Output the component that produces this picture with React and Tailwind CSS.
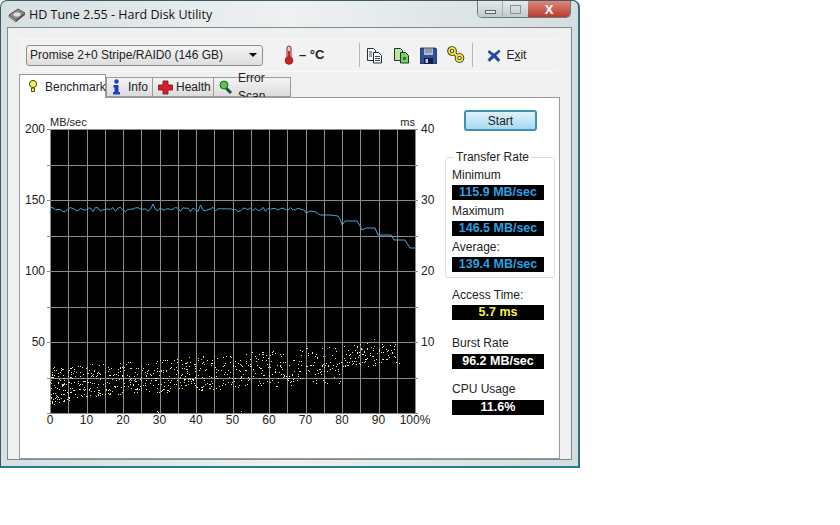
import React from "react";

const ui = { fontFamily: '"Liberation Sans", Arial, sans-serif' };

// small repeatable noise so the chart is the same on every load
const rnd = (n) => {
  const v = Math.sin(n * 12.9898 + 4.1) * 43758.5453;
  return v - Math.floor(v);
};

const gridX = Array.from({ length: 21 }, (_, i) => 50 + i * 18.25);
const gridY = Array.from({ length: 9 }, (_, i) => 129 + i * 35.5);

const lineTail = [
  [300, 209], [304, 210], [306, 213], [310, 211], [316, 212], [320, 215], [330, 215],
  [338, 216], [340, 219], [342, 225], [345, 221], [357, 221], [360, 226], [362, 230],
  [366, 228], [375, 228], [378, 235], [391, 235], [394, 240], [405, 240], [410, 248], [415, 248],
];

const linePoints = () => {
  const pts = [[50, 213], [51, 207]];
  for (let x = 53; x < 300; x += 2.5) {
    let y = 209.5 + (rnd(x) - 0.5) * 4.5;
    if (Math.abs(x - 154) < 1.5) y = 204;
    if (Math.abs(x - 200) < 1.5) y = 205;
    pts.push([x, y]);
  }
  return pts.concat(lineTail).map((p) => p.join(",")).join(" ");
};

const scatter = () => {
  const dots = [];
  for (let i = 0; i < 820; i++) {
    const t = Math.pow(rnd(i + 0.3), 1.25);
    const x = 50 + t * 345;
    const top = 367 - (x - 50) * 0.075;
    const bottom = x < 80 ? 405 - (x - 50) * 0.25 : 397 - (x - 80) * 0.055;
    const spread = x > 340 ? 0.6 : 1;
    const y = top + rnd(i + 7.7) * (bottom - top) * spread;
    dots.push([Math.round(x), Math.round(y)]);
  }
  dots.push([157, 411], [158, 412], [241, 411], [396, 362], [399, 363], [374, 339], [393, 342]);
  return dots;
};

const xLabels = ["0", "10", "20", "30", "40", "50", "60", "70", "80", "90"];

const Chart = () => (
  <svg viewBox="20 110 425 330" className="w-[425px] h-[330px] shrink-0" style={ui}>
    <rect x="50" y="129" width="365" height="284" fill="#000" />
    <g stroke="#8c8c8c" strokeWidth="1" shapeRendering="crispEdges">
      {gridX.map((x) => <line key={x} x1={Math.round(x) + 0.5} x2={Math.round(x) + 0.5} y1="129" y2="413" />)}
      {gridY.map((y) => <line key={y} x1="47" x2="418" y1={Math.round(y) + 0.5} y2={Math.round(y) + 0.5} />)}
    </g>
    <g fill="#e9e9a4" shapeRendering="crispEdges">
      {scatter().map(([x, y], i) => <rect key={i} x={x} y={y} width="1" height="1" />)}
    </g>
    <polyline points={linePoints()} fill="none" stroke="#4aa6d6" strokeWidth="1" />
    <g fill="#222" fontSize="12">
      <text x="50" y="126" fontSize="11">MB/sec</text>
      <text x="415" y="126" textAnchor="end" fontSize="11">ms</text>
      <text x="45" y="133" textAnchor="end">200</text>
      <text x="45" y="204" textAnchor="end">150</text>
      <text x="45" y="275" textAnchor="end">100</text>
      <text x="45" y="346" textAnchor="end">50</text>
      <text x="421" y="133">40</text>
      <text x="421" y="204">30</text>
      <text x="421" y="275">20</text>
      <text x="421" y="346">10</text>
      {xLabels.map((l, i) => <text key={l} x={50 + i * 36.5} y="424" textAnchor="middle">{l}</text>)}
      <text x="415" y="424" textAnchor="middle">100%</text>
    </g>
  </svg>
);

const Readout = ({ value, color }) => (
  <div className={`w-[92px] h-[15px] bg-black font-bold text-[12.5px] leading-[15px] text-center ${color}`}>{value}</div>
);

const DiskIcon = () => (
  <svg width="18" height="16" viewBox="0 0 18 16">
    <path d="M1 8 L10 2 L17 6 L8 13 Z" fill="#8d8d88" stroke="#55524c" />
    <path d="M1 8 L8 13 L8 15 L1 10 Z" fill="#b9a98c" stroke="#55524c" strokeWidth=".6" />
    <path d="M8 13 L17 6 L17 8 L8 15 Z" fill="#56534e" />
    <ellipse cx="9" cy="7.5" rx="3.5" ry="2" fill="#ddd" />
  </svg>
);

const Thermometer = () => (
  <svg width="12" height="20" viewBox="0 0 12 20">
    <rect x="4" y="1" width="4" height="13" rx="2" fill="#e8c8c8" stroke="#8a2a2a" />
    <rect x="5" y="6" width="2" height="9" fill="#d42020" />
    <circle cx="6" cy="15.5" r="3.8" fill="#d42020" stroke="#8a2a2a" />
  </svg>
);

const CopyIcon = ({ green }) => (
  <svg width="17" height="17" viewBox="0 0 17 17">
    <path d="M1.5 1.5h6l2 2v10h-8z" fill={green ? "#bfe6a0" : "#fff"} stroke="#1f2f3f" />
    <path d="M7.5 5.5h5l3 3v7.500h-8z" fill={green ? "#7fcf5a" : "#fff"} stroke="#1f2f3f" />
    {green ? (
      <rect x="10" y="10" width="3" height="3" fill="#1f7f2f" />
    ) : (
      <path d="M9 9.500h5M9 11.500h5M9 13.500h5M3 5h3M3 7h3M3 9h3" stroke="#35506a" />
    )}
  </svg>
);

const FloppyIcon = () => (
  <svg width="17" height="17" viewBox="0 0 17 17">
    <path d="M.5 1h15l1 1v15H.5z" fill="#2c4f9e" stroke="#14275c" strokeWidth=".8" />
    <rect x="4" y="1.500" width="9" height="6.500" fill="#b8bcc8" />
    <path d="M5 3h7M5 5h7" stroke="#6c7280" />
    <rect x="4" y="11" width="9" height="6" fill="#10203f" />
    <rect x="5.500" y="12" width="2.500" height="4" fill="#c8ccd8" />
  </svg>
);

const ChainIcon = () => (
  <svg width="18" height="18" viewBox="0 0 18 18">
    <g fill="none" stroke="#2f2f10" strokeWidth="3.600">
      <circle cx="5" cy="5" r="3" />
      <circle cx="12.500" cy="12" r="3" />
      <path d="M7 7l3 3" />
    </g>
    <g fill="none" stroke="#f1e24a" strokeWidth="1.800">
      <circle cx="5" cy="5" r="3" />
      <circle cx="12.500" cy="12" r="3" />
      <path d="M7 7l3 3" />
    </g>
  </svg>
);

const ExitX = () => (
  <svg width="14" height="13" viewBox="0 0 14 13">
    <path d="M2 1.500 L7 5 L12 1 L13 2.500 L9 6.500 L13 11 L11 12.500 L7 8.500 L2.500 12.500 L1 10.500 L5 6.500 L1 3 Z" fill="#1d49ad" stroke="#12307c" strokeWidth=".6" />
  </svg>
);

const BulbIcon = () => (
  <svg width="10" height="15" viewBox="0 0 10 15">
    <circle cx="5" cy="5" r="3.600" fill="#f3ef58" stroke="#4a4a18" />
    <path d="M3.500 9h3v3.500h-3z" fill="#f3ef58" stroke="#4a4a18" />
  </svg>
);

const InfoIcon = () => (
  <svg width="9" height="16" viewBox="0 0 9 16">
    <circle cx="4.500" cy="2.500" r="2.200" fill="#1b3fc0" />
    <path d="M1.500 6h5v7h1.500v2.500H1v-2.500h1.500V8.500h-1z" fill="#1b3fc0" />
  </svg>
);

const CrossIcon = () => (
  <svg width="15" height="15" viewBox="0 0 15 15">
    <path d="M5 1h5v4h4.500v5H10v4H5v-4H.500V5H5z" fill="#d8202a" stroke="#6c1014" strokeWidth=".8" />
  </svg>
);

const ZoomIcon = () => (
  <svg width="14" height="15" viewBox="0 0 14 15">
    <path d="M7 8l5 5" stroke="#1e4a4a" strokeWidth="3" />
    <circle cx="5" cy="5" r="4" fill="#5ec24a" stroke="#1d6a30" />
  </svg>
);

const Tab = ({ icon, label, active, className }) => (
  <div
    className={`flex items-center border border-[#9a9a9a] text-[12px] text-[#222] ${
      active
        ? "h-[24px] bg-white border-b-0 relative z-10 -mb-px"
        : "h-[20px] bg-gradient-to-b from-[#f4f4f4] to-[#dcdcdc] -ml-px"
    } ${className}`}
  >
    {icon}
    <span>{label}</span>
  </div>
);

const WindowButtons = () => (
  <div className="flex h-[17px] mr-[7px] border border-t-0 border-[#6f7a80] rounded-b-[5px] overflow-hidden">
    <div className="w-[25px] flex items-center justify-center bg-gradient-to-b from-[#e6e9ea] to-[#c4c9cc] border-r border-[#a9b0b3]">
      <div className="w-[11px] h-[4px] mt-[5px] border border-[#5d666c] bg-[#e8ecee]" />
    </div>
    <div className="w-[25px] flex items-center justify-center bg-gradient-to-b from-[#e6e9ea] to-[#c4c9cc]">
      <div className="w-[11px] h-[9px] border border-[#8c9498]" />
    </div>
    <div className="w-[42px] flex items-center justify-center bg-gradient-to-b from-[#d9887c] to-[#b83a2c] text-white font-bold text-[13px] leading-none">
      X
    </div>
  </div>
);

export default function App() {
  return (
    <div className="w-[840px] h-[525px] bg-white" style={ui}>
      <div className="w-[580px] h-[468px] flex flex-col rounded-t-[7px] border border-[#3d5a63] border-b-2 border-b-[#2b7c88] border-r-2 border-r-[#2f6f7a] bg-gradient-to-r from-[#d6dfe2] via-[#eef1f2] to-[#d4dde0]">
        <div className="h-[26px] flex justify-between shrink-0">
          <div className="flex items-center gap-[3px] pl-[7px] pt-[2px]">
            <DiskIcon />
            <span className="text-[12.5px] text-[#111]" style={{ fontFamily: '"Open Sans", sans-serif' }}>
              HD Tune 2.55 - Hard Disk Utility
            </span>
          </div>
          <WindowButtons />
        </div>

        <div className="mx-[6px] mb-[6px] grow border border-[#7f8a8f] bg-[#f0f0f0] flex flex-col px-[11px] pt-[10px]">
          <div className="h-[34px] mr-[1px] flex items-center border-y border-[#f8f8f8] bg-[#f2f2f2] rounded-[2px] pl-[7px]">
            <div className="w-[237px] h-[21px] flex items-center justify-between border border-[#8e8e8e] rounded-[3px] bg-gradient-to-b from-[#f5f5f5] to-[#dedede] pl-[3px] pr-[5px] text-[12px] text-[#222]">
              <span>Promise 2+0 Stripe/RAID0 (146 GB)</span>
              <span className="w-0 h-0 border-x-[4px] border-x-transparent border-t-[4px] border-t-black" />
            </div>
            <div className="ml-[20px] flex items-center">
              <Thermometer />
              <span className="ml-[4px] text-[13px] font-bold text-[#222]">– °C</span>
            </div>
            <div className="ml-[35px] w-px h-[24px] bg-[#b8b8b8]" />
            <div className="ml-[6px] flex items-center gap-[10px]">
              <CopyIcon />
              <CopyIcon green />
              <FloppyIcon />
              <ChainIcon />
            </div>
            <div className="ml-[7px] w-px h-[24px] bg-[#b8b8b8]" />
            <div className="ml-[14px] flex items-center gap-[5px] text-[12px] text-[#222]">
              <ExitX />
              <span>
                E<span className="underline">x</span>it
              </span>
            </div>
          </div>

          <div className="flex items-end h-[26px] mt-[-1px]">
            <Tab active icon={<span className="mr-[7px]"><BulbIcon /></span>} label="Benchmark" className="w-[87px] pl-[8px]" />
            <Tab icon={<span className="mr-[7px]"><InfoIcon /></span>} label="Info" className="w-[47px] pl-[5px] ml-0" />
            <Tab icon={<span className="mr-[3px]"><CrossIcon /></span>} label="Health" className="w-[62px] pl-[5px]" />
            <Tab icon={<span className="mr-[5px]"><ZoomIcon /></span>} label="Error Scan" className="w-[78px] pl-[5px]" />
          </div>

          <div className="w-[541px] h-[362px] bg-white border border-[#9a9a9a] flex">
            <div className="pt-[12px]">
              <Chart />
            </div>
            <div className="w-[110px] text-[12px] text-[#222]">
              <div className="ml-[19px] mt-[12px] w-[73px] h-[21px] flex items-center justify-center border-2 border-[#3f93ad] rounded-[3px] bg-gradient-to-b from-[#dff2fb] to-[#a8d9f1]">
                Start
              </div>
              <fieldset className="mt-[20px] h-[127px] border border-[#d5dfe5] rounded-[3px] pl-[6px] pr-[10px] pt-0">
                <legend className="ml-[2px] px-[2px] text-[12px] leading-[12px]">Transfer Rate</legend>
                <div className="mt-[5px] h-[17px] leading-[15px]">Minimum</div>
                <Readout value="115.9 MB/sec" color="text-[#2b9fe0]" />
                <div className="mt-[3px] h-[18px] leading-[16px]">Maximum</div>
                <Readout value="146.5 MB/sec" color="text-[#2b9fe0]" />
                <div className="mt-[3px] h-[18px] leading-[16px]">Average:</div>
                <Readout value="139.4 MB/sec" color="text-[#2b9fe0]" />
              </fieldset>
              <div className="pl-[7px]">
                <div className="mt-[9px] h-[18px] leading-[16px]">Access Time:</div>
                <Readout value="5.7 ms" color="text-[#f2f24a]" />
                <div className="mt-[15px] h-[19px] leading-[17px]">Burst Rate</div>
                <Readout value="96.2 MB/sec" color="text-white" />
                <div className="mt-[12px] h-[19px] leading-[17px]">CPU Usage</div>
                <Readout value="11.6%" color="text-white" />
              </div>
            </div>
          </div>
        </div>
      </div>
    </div>
  );
}
